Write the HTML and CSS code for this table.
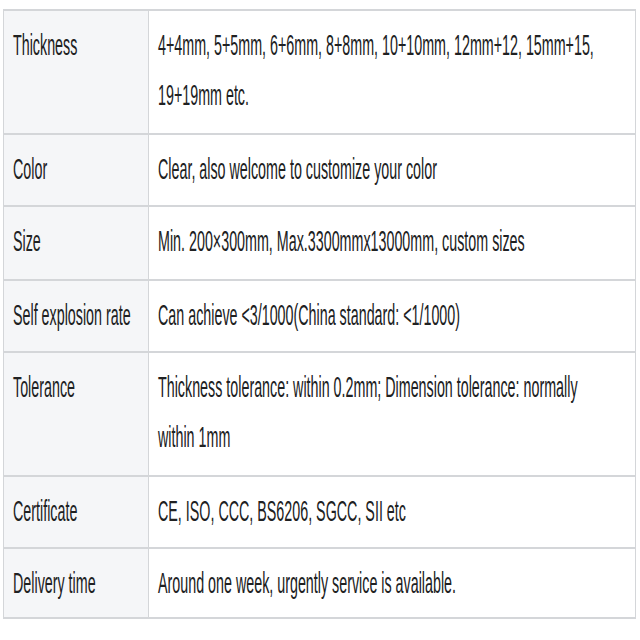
FILE: index.html
```html
<!DOCTYPE html>
<html lang="en">
<head>
<meta charset="utf-8">
<title>Specifications</title>
<link rel="stylesheet" href="styles.css">
</head>
<body>
<div class="page">
  <table class="spec">
    <colgroup><col class="c-key"><col class="c-val"></colgroup>
    <tbody>
      <tr><th>Thickness</th><td>4+4mm, 5+5mm, 6+6mm, 8+8mm, 10+10mm, 12mm+12, 15mm+15, 19+19mm etc.</td></tr>
      <tr><th>Color</th><td>Clear, also welcome to customize your color</td></tr>
      <tr><th>Size</th><td>Min. 200×300mm, Max.3300mmx13000mm, custom sizes</td></tr>
      <tr><th>Self explosion rate</th><td>Can achieve &lt;3/1000(China standard: &lt;1/1000)</td></tr>
      <tr><th>Tolerance</th><td>Thickness tolerance: within 0.2mm; Dimension tolerance: normally within 1mm</td></tr>
      <tr><th>Certificate</th><td>CE, ISO, CCC, BS6206, SGCC, SII etc</td></tr>
      <tr class="last"><th>Delivery time</th><td>Around one week, urgently service is available.</td></tr>
    </tbody>
  </table>
</div>
</body>
</html>
```

FILE: styles.css
```css
html, body {
  margin: 0;
  padding: 0;
  background: #ffffff;
  min-height: 640px;
}

.page {
  box-sizing: border-box;
  padding: 9px 0 0 3px;
  width: 640px;
  height: 640px;
  overflow: hidden;
}

.spec {
  width: 633px;
  border-collapse: collapse;
  table-layout: fixed;
  font-family: "Liberation Sans", Arial, sans-serif;
  font-size: 14.3px;
  line-height: 25px;
  color: #202122;
  transform: scaleY(2);
  transform-origin: 0 0;
}

.c-key { width: 145px; }

.spec th,
.spec td {
  border: 1px solid #d4d6d9;
  padding: 5.25px 9px;
  text-align: left;
  vertical-align: top;
  font-weight: normal;
}

.spec th {
  background: #f5f6f8;
}

.spec td {
  background: #ffffff;
  padding-right: 24px;
}

.spec .last th,
.spec .last td {
  padding-bottom: 3.5px;
}
```
